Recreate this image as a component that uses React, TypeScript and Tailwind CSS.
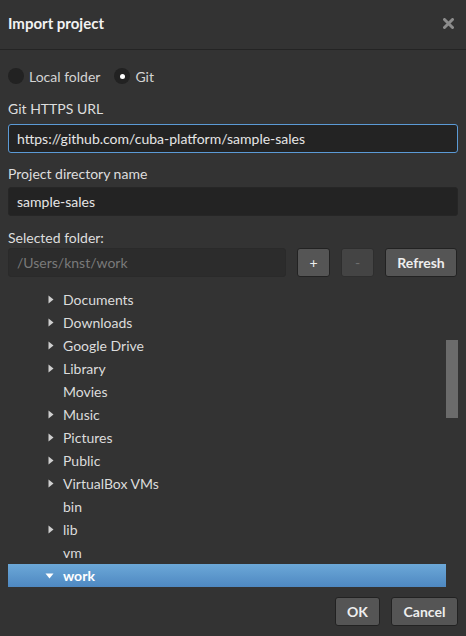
import { useState } from "react";

type Node = { name: string; expandable: boolean; open?: boolean };

const folders: Node[] = [
  { name: "Documents", expandable: true },
  { name: "Downloads", expandable: true },
  { name: "Google Drive", expandable: true },
  { name: "Library", expandable: true },
  { name: "Movies", expandable: false },
  { name: "Music", expandable: true },
  { name: "Pictures", expandable: true },
  { name: "Public", expandable: true },
  { name: "VirtualBox VMs", expandable: true },
  { name: "bin", expandable: false },
  { name: "lib", expandable: true },
  { name: "vm", expandable: false },
  { name: "work", expandable: true, open: true },
];

function Radio({ checked, label, onClick }: { checked: boolean; label: string; onClick: () => void }) {
  return (
    <button onClick={onClick} className="flex items-center gap-[5px]">
      <span className="flex h-4 w-4 items-center justify-center rounded-full bg-[#222222]">
        {checked && <span className="h-[5px] w-[5px] rounded-full bg-white" />}
      </span>
      <span className="text-[14px] text-[#d4d4d4]">{label}</span>
    </button>
  );
}

function Arrow({ open }: { open?: boolean }) {
  if (open) {
    return (
      <svg width="9" height="6" viewBox="0 0 9 6" className="fill-white">
        <path d="M0.5 0.5 L8.5 0.5 L4.5 5.5 Z" />
      </svg>
    );
  }
  return (
    <svg width="6" height="9" viewBox="0 0 6 9" className="fill-[#cfcfcf]">
      <path d="M0.5 0.5 L5.5 4.5 L0.5 8.5 Z" />
    </svg>
  );
}

export default function App() {
  const [source, setSource] = useState<"local" | "git">("git");
  const [selected, setSelected] = useState("work");

  return (
    <div className="flex h-[636px] w-[466px] flex-col bg-[#333333] font-['Lato',sans-serif] text-[#d8d8d8]">
      <header className="flex h-[50px] items-center justify-between border-b border-[#242424] px-2 pb-[3px]">
        <h1 className="text-[15px] font-bold text-[#f2f2f2]">Import project</h1>
        <svg width="11" height="11" viewBox="0 0 11 11" className="mr-[4px] mt-[1px]">
          <path d="M1.5 1.5 L9.5 9.5 M9.5 1.5 L1.5 9.5" stroke="#8c8c8c" strokeWidth="3" strokeLinecap="round" />
        </svg>
      </header>

      <div className="flex flex-1 flex-col px-2">
        <div className="mt-[18px] flex h-4 items-center gap-[14px]">
          <Radio checked={source === "local"} label="Local folder" onClick={() => setSource("local")} />
          <Radio checked={source === "git"} label="Git" onClick={() => setSource("git")} />
        </div>

        <label className="mt-[16px] text-[14px] leading-[18px] text-[#dedede]">Git HTTPS URL</label>
        <input
          defaultValue="https://github.com/cuba-platform/sample-sales"
          className="mt-[6px] h-[29px] w-full rounded-[3px] border border-[#5b9ad6] bg-[#232323] px-2 text-[14px] text-[#e6e6e6] outline-none"
        />

        <label className="mt-[12px] text-[14px] leading-[18px] text-[#dedede]">Project directory name</label>
        <input
          defaultValue="sample-sales"
          className="mt-[4px] h-[29px] w-full rounded-[3px] border border-[#262626] bg-[#232323] px-2 text-[14px] text-[#e6e6e6] outline-none"
        />

        <label className="mt-[13px] text-[14px] leading-[18px] text-[#dedede]">Selected folder:</label>
        <div className="mt-[1px] flex h-[29px] items-stretch">
          <input
            readOnly
            value="/Users/knst/work"
            className="w-[278px] rounded-[3px] border border-[#2a2a2a] bg-[#2c2c2c] px-2 text-[14px] text-[#7a7a7a] outline-none"
          />
          <button className="ml-[11px] w-[33px] rounded-[3px] border border-[#222222] bg-[#555555] text-[14px] text-[#eeeeee]">+</button>
          <button className="ml-[11px] w-[33px] rounded-[3px] border border-[#2e2e2e] bg-[#444444] text-[14px] text-[#6f6f6f]">-</button>
          <button className="ml-[11px] w-[72px] rounded-[3px] border border-[#222222] bg-[#555555] text-[14px] font-bold text-[#eeeeee]">
            Refresh
          </button>
        </div>

        <div className="mt-[11px] flex">
          <ul className="flex-1">
            {folders.map((f) => {
              const isSel = f.name === selected;
              return (
                <li
                  key={f.name}
                  onClick={() => setSelected(f.name)}
                  className={
                    isSel
                      ? "flex h-[23px] items-center bg-gradient-to-b from-[#6ca8d8] to-[#4e88c1] text-[14px] font-bold text-white"
                      : "flex h-[23px] items-center text-[14px] text-[#dcdcdc]"
                  }
                >
                  <span className="flex w-[55px] justify-end pr-[9px]">{f.expandable && <Arrow open={f.open} />}</span>
                  <span>{f.name}</span>
                </li>
              );
            })}
          </ul>
          <div className="w-[12px]">
            <div className="mt-[52px] h-[78px] w-full bg-[#6b6b6b]" />
          </div>
        </div>

        <div className="mt-[10px] flex justify-end gap-[11px]">
          <button className="h-[29px] w-[45px] rounded-[3px] border border-[#222222] bg-[#555555] text-[14px] font-bold text-[#eeeeee]">
            OK
          </button>
          <button className="h-[29px] w-[67px] rounded-[3px] border border-[#222222] bg-[#555555] text-[14px] font-bold text-[#eeeeee]">
            Cancel
          </button>
        </div>
      </div>
    </div>
  );
}
